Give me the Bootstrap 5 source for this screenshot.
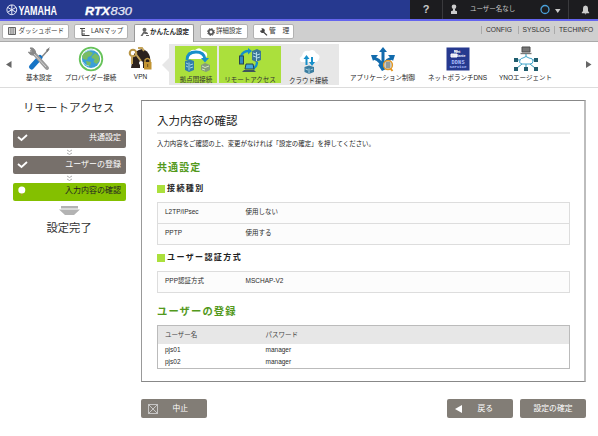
<!DOCTYPE html>
<html lang="ja">
<head>
<meta charset="utf-8">
<meta name="viewport" content="width=device-width, initial-scale=1">
<title>YAMAHA RTX830</title>
<link href="https://cdn.jsdelivr.net/npm/bootstrap@5.3.0/dist/css/bootstrap.min.css" rel="stylesheet">
<style>
body{font-family:"Liberation Sans","Noto Sans CJK JP",sans-serif;font-size:6.5px;line-height:1;color:#2b2b2b;background:#fff;overflow:hidden}
svg{display:block;flex:none}
body *{white-space:nowrap}
.topbar{height:21px;background:#26398f;border-bottom:2px solid #6565ee}
.brand-area{width:410px}
.tools{background:#1c1c1f;color:#c9c9c9;width:188px}
.tools>div{height:19px}
.t-sep{border-right:1px solid #3a3a3d}
.tabs{height:20px;background:#cfcfcf;padding:3px 5px 0 2px}
.tabx{height:15px;background:#fff;border:1px solid #b2b2b2;border-radius:2px;color:#333}
.tab-open{height:18px;border-bottom:0;border-radius:2px 2px 0 0;border-color:#999;font-weight:700;color:#222;padding-bottom:3px}
.tabs-line{height:1px;background:linear-gradient(90deg,#aaa 134px,#fff 134px,#fff 194px,#aaa 194px)}
.toplinks{height:11px;color:#333;font-size:6.7px}
.toplinks span{border-left:1px solid #aaa;padding-left:4px;line-height:8px}
.iconnav{height:46px;border-bottom:1px solid #dcdcdc;padding-top:2px;color:#222}
.navitem{height:39px;flex:none}
.navitem svg{height:26px}
.navitem span{line-height:9px;margin-top:1px}
.subpanel{background:#e7e7e7;height:41px;width:170px;padding:2px 0 0 6px;flex:none}
.subpanel .navitem{height:37px}
.on{background:#abe03c}
.side{width:141px;padding-top:13px}
.side h1,.side h2{font-size:11.5px;line-height:14px;margin:0;color:#333}
.step{width:113px;height:18px;border-radius:2px;background:#77706b;color:#fff;font-size:8px;padding:0 5px 1px 4px}
.step-on{background:#84c000;color:#222}
.chev{height:8.5px}
.mainbox{width:445px;height:282px;border:1px solid #888;border-right:2px solid #bdbdbd;border-left-color:#999;padding:11px 14px 0 15px}
.mainbox h3{font-size:11.5px;line-height:18px;margin:0;height:21px;border-bottom:0;color:#222}
.rule{height:2px;background:#e8e8e8}
.lead-txt{font-size:6.43px;line-height:10px;padding-top:5px;color:#222}
.green-h{font-size:10px;font-weight:700;letter-spacing:1.1px;color:#53991c;line-height:16px;height:16px}
.sub-h{font-size:8px;font-weight:700;letter-spacing:1.4px;line-height:12px;height:12px;gap:2px;color:#222}
.sq{width:8px;height:8px;background:#abe03c}
.gridbox{border:1px solid #ddd;background:#fcfcfc}
.gridrow{height:20px;padding:0 0 1px 7px}
.gridrow+.gridrow{border-top:1px solid #ddd;height:21px}
.k{width:80.5px}
.users{border:1px solid #bbb;height:44px}
.users .k{width:100.5px}
.uhead{height:18px;background:#e7e7e7;padding-left:7px;color:#444}
.urow{height:12.7px;padding:0 0 1px 7px}
.btnx{height:19px;width:66px;border-radius:2px;background:#827d76;color:#fff;font-size:7.8px;line-height:1;border:0;padding:0}
.foot{width:445px;margin-top:17px}
</style>
</head>
<body>
<header class="topbar d-flex">
  <div class="brand-area">
    <svg width="140" height="19" viewBox="0 0 140 19">
      <g fill="none" stroke="#e8ebf8"><circle cx="11.8" cy="9.8" r="4.9" stroke-width="1"/><path d="M11.8 5v9.600M7.600 7.400l8.400 4.800M16 7.400l-8.400 4.800" stroke-width="1"/></g>
      <text x="18.500" y="14.500" font-size="13" font-weight="700" fill="#fff" textLength="38.500" lengthAdjust="spacingAndGlyphs">YAMAHA</text>
      <text x="85" y="14.500" font-size="11.500" font-weight="700" font-style="italic" fill="#fff" stroke="#fff" stroke-width=".3" textLength="25" lengthAdjust="spacingAndGlyphs">RTX</text>
      <text x="110.500" y="14.500" font-size="11.500" font-style="italic" fill="#e4e7f5" stroke="#e4e7f5" stroke-width=".25" textLength="21.500" lengthAdjust="spacingAndGlyphs">830</text>
    </svg>
  </div>
  <div class="tools d-flex">
    <div class="t-sep d-flex align-items-center justify-content-center fw-bold" style="width:33px;font-size:11px">?</div>
    <div class="t-sep d-flex align-items-center" style="width:126px;padding-left:7px">
      <svg width="8" height="11" viewBox="0 0 8 11" fill="#ccc"><circle cx="4" cy="2.800" r="2.300"/><path d="M3 4.500h2v2l2 .8V10H1V7.300l2-.8z"/></svg>
      <span style="margin-left:12px;width:69px">ユーザー名なし</span>
      <svg width="24" height="12" viewBox="0 0 24 12"><circle cx="6" cy="5.500" r="4" fill="none" stroke="#4aa0d8" stroke-width="1.300"/><path d="M16 5h5.500l-2.750 4z" fill="#ccc"/></svg>
    </div>
    <div class="d-flex align-items-center justify-content-center" style="width:29px;padding-left:3px"><svg width="9" height="10" viewBox="0 0 9 10" fill="#ccc"><path d="M4.500 .5C2.500 .8 2 2 2 4v2L.8 7.500v.7h7.400v-.7L7 6V4C7 2 6.500.8 4.500.5zM3.500 8.500h2l-1 1z"/></svg></div>
  </div>
</header>

<nav class="tabs d-flex align-items-start">
  <div class="tabx d-flex align-items-center" style="width:67px;padding-left:5px;gap:1.5px">
    <svg width="9" height="9" viewBox="0 0 9 9"><path d="M.5.5h7v7h-7zM4 .5v7" fill="none" stroke="#555" stroke-width=".9"/><path d="M1.500 2h1.500M5 2h1.500M1.500 4h1.500M5 4h1.500M1.500 6h1.500M5 6h1.500" stroke="#444"/></svg><span style="font-size:6.5px">ダッシュボード</span></div>
  <div class="tabx d-flex align-items-center" style="width:54px;margin-left:5px;padding-left:5px;gap:1px">
    <svg width="10" height="10" viewBox="0 0 10 10" fill="none" stroke="#444"><path d="M0 1.500h5M2 4h3M2 7h3M2 1.500v7h7.500"/></svg><span>LANマップ</span></div>
  <div class="tabx tab-open d-flex align-items-center" style="width:60px;margin-left:6px;padding-left:5px;gap:0">
    <svg width="10" height="10" viewBox="0 0 10 10" fill="#666"><circle cx="4.500" cy="2.800" r="2"/><path d="M3.500 4.500h2L8 6v1H5L4 6.500 2.500 9H.5zM6 8h3v1H6z"/></svg><span style="font-size:6.5px">かんたん設定</span></div>
  <div class="tabx d-flex align-items-center" style="width:48px;margin-left:6px;padding-left:6px;gap:1px">
    <svg width="8" height="8" viewBox="0 0 8 8"><circle cx="4" cy="4" r="2.300" fill="none" stroke="#555" stroke-width="1.700"/><circle cx="4" cy="4" r="3.500" fill="none" stroke="#555" stroke-dasharray="1.400 1.350"/></svg><span>詳細設定</span></div>
  <div class="tabx d-flex align-items-center" style="width:41px;margin-left:5px;padding-left:6px;gap:1px">
    <svg width="8" height="8" viewBox="0 0 8 8"><path d="M.6 2.700A2 2 0 0 0 3.500 4L7 7.400" fill="none" stroke="#444" stroke-width="1.300"/><path d="M1.200.5l1 1.500-1.400.8A2 2 0 0 0 4.300 4 2.400 2.400 0 0 0 1.200.5z" fill="#444"/></svg><span style="font-size:6.8px">管　理</span></div>
  <div class="toplinks d-flex align-items-center ms-auto"><span style="width:36.5px">CONFIG</span><span style="width:36.5px">SYSLOG</span><span style="width:39px">TECHINFO</span></div>
</nav>
<div class="tabs-line"></div>

<section class="iconnav d-flex align-items-start">
  <svg width="14" height="39" viewBox="0 0 14 39"><path d="M6 20.500l5.500-3.500v7z" fill="#666"/></svg>
  <div class="navitem d-flex flex-column align-items-center" style="width:50px;padding-top:2px">
    <svg width="24" viewBox="0 0 24 26"><path d="M22 3l-9 10" stroke="#888" stroke-width="1.500"/><path d="M23 1l-4 3 1.500 2z" fill="#777"/><path d="M13 11.500L4.500 21" stroke="#1774c5" stroke-width="5" stroke-linecap="round"/><path d="M5 5l15 17" stroke="#9b9b9b" stroke-width="4" stroke-linecap="round"/><path d="M3 2l2.800 3-1 2L1.500 6A4.500 4.500 0 0 0 8 8.500 4.500 4.500 0 0 0 3 2z" fill="#888" stroke="#888"/><path d="M7 8l12 13" stroke="#d2d2d2"/></svg>
    <span>基本設定</span></div>
  <div class="navitem d-flex flex-column align-items-center" style="width:53px;padding-top:2px">
    <svg width="26" viewBox="0 0 26 26"><circle cx="13" cy="13" r="11.300" fill="#fff" stroke="#67c35a" stroke-width="1.800"/><circle cx="13" cy="13" r="9" fill="#3b9fd6"/><path d="M6 7l5-2 4 2-2 3-3 1-1 3-4-1-1-3zM14 10l3-3 4 3 .5 5-3 3-3-2 1-3-3-1zM8 15l5 1-1 4-3-1z" fill="#79bc64"/><path d="M7 6q4-3 8-2M5 16q2 4 6 4" stroke="#9fd5f0" fill="none"/></svg>
    <span>プロバイダー接続</span></div>
  <div class="navitem d-flex flex-column align-items-center" style="width:45px;padding:1px 0 0 2px">
    <svg width="26" viewBox="0 0 26 26"><path d="M5 12Q7 5 14 4q6 1 8 8l1 11H3z" fill="#2b211d"/><circle cx="5" cy="8" r="3.300" fill="none" stroke="#b99545" stroke-width="2"/><path d="M7 8l6 8M4 10v9M10 3h4l2 3" stroke="#c4a45b" stroke-width="2" fill="none"/><circle cx="13" cy="18" r="2" fill="#fff"/><path d="M12 19h3v4h-3z" fill="#fff"/><path d="M17 18v-3q2.500-3 5 0v3" fill="none" stroke="#c49b3f" stroke-width="1.400"/><rect x="16" y="17" width="7.500" height="7.500" fill="#c29432"/><path d="M19.700 19v3" stroke="#70501a"/></svg>
    <span>VPN</span></div>
  <svg width="7" height="41" viewBox="0 0 7 41"><path d="M0 21l7-7v14z" fill="#e7e7e7"/></svg>
  <div class="subpanel d-flex">
    <div class="navitem on d-flex flex-column align-items-center" style="width:42px;padding-top:1px">
      <svg width="30" viewBox="0 0 30 26"><path d="M7 12q-3-3 1-5 1-5 6-4 5-4 8 1 5 1 4 5-1 3-3 3z" fill="#fff"/><path d="M6 13q0-8 9-8 8 0 9 7" fill="none" stroke="#168fca" stroke-width="2.800"/><path d="M20 11h8l-4 4.500z" fill="#168fca"/><path d="M4 14l5-1.500 4 1.500v9l-5 2-4-2z" fill="#337faa"/><path d="M8 15.500v8M5 16l2 1M5 19l2 1M9 18l3-1M9 21l3-1" stroke="#a4d3e7"/><path d="M20 18l4-2 5 2v5l-4 2-5-2z" fill="#849d78"/><path d="M21 19l3 1.500 4-1.500M21 22l3 1" stroke="#d3e4c0" fill="none"/></svg>
      <span style="margin-top:2px;color:#333">拠点間接続</span></div>
    <div class="navitem on d-flex flex-column align-items-center" style="width:62px;margin-left:2px;padding-top:1px">
      <svg width="26" viewBox="0 0 26 26"><path d="M4 9q2-5 8-5" fill="none" stroke="#168fca" stroke-width="2.300"/><path d="M11 1l4 3-4 3.500z" fill="#168fca"/><path d="M20 15q0 5-4 6" fill="none" stroke="#168fca" stroke-width="2.300"/><path d="M17 18l-3 3 4 2z" fill="#168fca"/><path d="M15 4l5-2 4 2v9l-5 2-4-2z" fill="#3d7797"/><path d="M19.500 5v9M16 6l3 1M16 9l3 1M20 8l3-1M20 11l3-1" stroke="#b2d9e8"/><rect x="2.500" y="9" width="4" height="8" fill="#318ac0" stroke="#294450"/><path d="M9 17h7l1 5H8z" fill="#45a7d9" stroke="#26424f"/><path d="M7 23h10l2 2H5z" fill="#3d545e"/></svg>
      <span style="margin-top:2px;color:#333">リモートアクセス</span></div>
    <div class="navitem d-flex flex-column align-items-center" style="width:55px;padding-top:2px">
      <svg width="26" viewBox="0 0 26 26"><path d="M5 14q-3-4 1-6 1-6 7-5 5-3 7 2 5 2 3 6-1 3-4 3z" fill="#fff"/><path d="M10.500 17V9M16 9v7" stroke="#168fca" stroke-width="2"/><path d="M7.500 11l3-4 3 4zM13 14h6l-3 4z" fill="#168fca"/><path d="M8.500 19l4.500-1.500 5 1.500v5l-5 2-4.500-2z" fill="#397da0"/><path d="M13 20.500v5M9.500 21l2.500 1M14.500 22l2.500-1" stroke="#aed5e5"/></svg>
      <span style="margin-top:2px">クラウド接続</span></div>
  </div>
  <div class="navitem d-flex flex-column align-items-center" style="width:87px;padding-top:2px">
    <svg width="26" viewBox="0 0 26 26"><path d="M13 22V4M13 23Q12 15 4 12M13 23q1-8 9-11" stroke="#126bad" stroke-width="3" fill="none"/><path d="M9 6l4-5 4 5zM1 9h7l-5 6zM18 9h7l-2 6z" fill="#126bad"/><path d="M8 19l5-3 3 7-4 2z" fill="#126bad"/><rect x="15" y="15" width="4.500" height="7" fill="#7b8a92"/><circle cx="18" cy="19" r="4.500" fill="#c5c9c5" stroke="#e69720" stroke-width="1.300"/><path d="M17 16v6M19 16v6" stroke="#5e6c73"/><path d="M20.500 22.500l2 2.500" stroke="#e69720" stroke-width="2"/></svg>
    <span>アプリケーション制御</span></div>
  <div class="navitem d-flex flex-column align-items-center" style="width:63px;padding-top:2px">
    <svg width="24" viewBox="0 0 24 26"><rect x=".5" y="1.500" width="23" height="23" fill="#26398f"/><path d="M5 8h6v3H5zM8 5h4" stroke="#fff" fill="#dde"/><text x="8" y="6.500" font-size="4" font-weight="700" fill="#fff">Net</text><text x="7" y="10.500" font-size="3.500" font-weight="700" fill="#fff">Volante</text><g font-family="Liberation Mono" font-weight="700" fill="#aebfff"><text x="5.500" y="17.500" font-size="5.200" textLength="13">DDNS</text><text x="3.500" y="22" font-size="4.300" textLength="17">Service</text></g></svg>
    <span>ネットボランチDNS</span></div>
  <div class="navitem d-flex flex-column align-items-center" style="width:73px;padding-top:2px">
    <svg width="26" viewBox="0 0 26 26"><path d="M9 1h8v5H9z" fill="#777" stroke="#4c4c4c"/><path d="M7.500 7.500h11" stroke="#777" stroke-width="1.400"/><path d="M13 8v3M4 14h5M17 14h5M9 18l-5 4M13 18v4M17 18l5 4" stroke="#329bbb"/><path d="M9 18q-4-1-2-4 1-2 3-2 3-3 6 0 4 0 4 3 0 3-3 3z" fill="#fff" stroke="#44a7cc"/><path d="M1 12h4v4H1zM21 12h4v4h-4zM1 21h4v4H1zM11 21h4v4h-4zM21 21h4v4h-4z" fill="#205d6e"/></svg>
    <span>YNOエージェント</span></div>
  <svg width="13" height="39" viewBox="0 0 13 39" class="ms-auto"><path d="M6.500 20.500L1 17v7z" fill="#666"/></svg>
</section>

<div class="d-flex">
  <aside class="side d-flex flex-column">
    <h1 class="fw-normal" style="margin-left:23px">リモートアクセス</h1>
    <div class="d-flex flex-column align-items-start" style="margin:14.5px 0 0 13px">
      <div class="step d-flex align-items-center justify-content-between"><svg width="11" height="8" viewBox="0 0 11 8"><path d="M1 3l3.500 3L10 1" fill="none" stroke="#fff" stroke-width="1.800"/></svg><span>共通設定</span></div>
      <div class="chev"><svg width="113" height="8" viewBox="0 0 113 8"><path d="M54 2l2.500 1.500L59 2M54 5l2.500 1.500L59 5" fill="none" stroke="#999" stroke-width=".8"/></svg></div>
      <div class="step d-flex align-items-center justify-content-between"><svg width="11" height="8" viewBox="0 0 11 8"><path d="M1 3l3.500 3L10 1" fill="none" stroke="#fff" stroke-width="1.800"/></svg><span>ユーザーの登録</span></div>
      <div class="chev"><svg width="113" height="8" viewBox="0 0 113 8"><path d="M54 2l2.500 1.500L59 2M54 5l2.500 1.500L59 5" fill="none" stroke="#999" stroke-width=".8"/></svg></div>
      <div class="step step-on d-flex align-items-center justify-content-between"><svg width="10" height="12" viewBox="0 0 10 12"><path d="M4.800 7v4" stroke="#b79b31"/><circle cx="4.800" cy="5" r="3.500" fill="#fff"/></svg><span>入力内容の確認</span></div>
      <svg width="113" height="20" viewBox="0 0 113 20"><path d="M48 5h17v2.500H48zM46 8.500h21l-6 5.500h-9z" fill="#b3b3b3"/></svg>
    </div>
    <h2 class="fw-normal" style="margin-left:46.5px;font-size:11.3px">設定完了</h2>
  </aside>
  <main style="padding-top:12px">
    <div class="mainbox">
      <h3 class="fw-normal">入力内容の確認</h3>
      <div class="rule" style="margin-top:-1px"></div>
      <div class="lead-txt" style="height:26px">入力内容をご確認の上、変更がなければ「設定の確定」を押してください。</div>
      <div class="green-h">共通設定</div>
      <div class="sub-h d-flex align-items-center" style="margin-top:7px"><i class="sq"></i>接続種別</div>
      <div class="gridbox" style="margin-top:7px">
        <div class="gridrow d-flex align-items-center"><span class="k">L2TP/IPsec</span><span>使用しない</span></div>
        <div class="gridrow d-flex align-items-center"><span class="k">PPTP</span><span>使用する</span></div>
      </div>
      <div class="sub-h d-flex align-items-center" style="margin-top:7px"><i class="sq"></i>ユーザー認証方式</div>
      <div class="gridbox" style="margin-top:7px">
        <div class="gridrow d-flex align-items-center"><span class="k">PPP認証方式</span><span>MSCHAP-V2</span></div>
      </div>
      <div class="green-h" style="margin-top:11px;font-size:10.3px">ユーザーの登録</div>
      <div class="users" style="margin-top:5px">
        <div class="uhead d-flex align-items-center"><span class="k">ユーザー名</span><span>パスワード</span></div>
        <div class="urow d-flex align-items-center"><span class="k">pjs01</span><span>manager</span></div>
        <div class="urow d-flex align-items-center"><span class="k">pjs02</span><span>manager</span></div>
      </div>
    </div>
    <div class="foot d-flex">
      <button class="btn btnx d-flex align-items-center" style="padding-left:7px"><svg width="10" height="10" viewBox="0 0 10 10" fill="none" stroke="#d8d8d8" stroke-width=".8"><path d="M.5.500h9v9h-9zM.5.500l9 9M9.500.500l-9 9"/></svg><span style="margin-left:14.500px">中止</span></button>
      <button class="btn btnx ms-auto d-flex align-items-center" style="padding-left:8px"><svg width="7" height="8" viewBox="0 0 7 8"><path d="M7 0v8L0 4z" fill="#fff"/></svg><span style="margin-left:15.500px">戻る</span></button>
      <button class="btn btnx" style="margin-left:7px">設定の確定</button>
    </div>
  </main>
</div>
<script src="https://cdn.jsdelivr.net/npm/bootstrap@5.3.0/dist/js/bootstrap.bundle.min.js"></script>
</body>
</html>
